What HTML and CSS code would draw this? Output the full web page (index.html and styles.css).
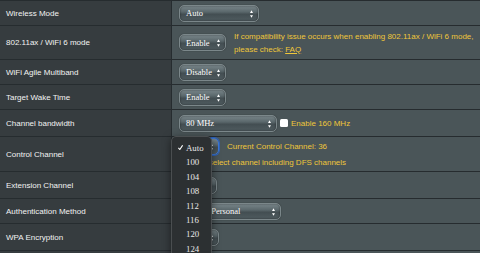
FILE: index.html
```html
<!DOCTYPE html>
<html lang="en">
<head>
    <meta charset="UTF-8">
    <meta name="viewport" content="width=device-width, initial-scale=1.0">
    <title>Wireless - Professional</title>
    <link rel="stylesheet" href="styles.css">
</head>
<body>

    <div class="form-table">
        <div class="row">
            <div class="label">Wireless Mode</div>
            <div class="value">
                <span class="select w-auto">Auto<svg class="arrows" viewBox="0 0 4 10"><path d="M2 0L4 3.5H0Z M2 10L4 6.5H0Z"/></svg></span>
            </div>
        </div>

        <div class="row row--tall">
            <div class="label">802.11ax / WiFi 6 mode</div>
            <div class="value">
                <span class="select w-enable">Enable<svg class="arrows" viewBox="0 0 4 10"><path d="M2 0L4 3.5H0Z M2 10L4 6.5H0Z"/></svg></span>
                <p class="hint">If compatibility issue occurs when enabling 802.11ax / WiFi 6 mode,<br>please check: <a href="#">FAQ</a></p>
            </div>
        </div>

        <div class="row">
            <div class="label">WiFi Agile Multiband</div>
            <div class="value">
                <span class="select w-enable">Disable<svg class="arrows" viewBox="0 0 4 10"><path d="M2 0L4 3.5H0Z M2 10L4 6.5H0Z"/></svg></span>
            </div>
        </div>

        <div class="row">
            <div class="label">Target Wake Time</div>
            <div class="value">
                <span class="select w-enable">Enable<svg class="arrows" viewBox="0 0 4 10"><path d="M2 0L4 3.5H0Z M2 10L4 6.5H0Z"/></svg></span>
            </div>
        </div>

        <div class="row row--mid">
            <div class="label">Channel bandwidth</div>
            <div class="value">
                <span class="select w-band">80 MHz<svg class="arrows" viewBox="0 0 4 10"><path d="M2 0L4 3.5H0Z M2 10L4 6.5H0Z"/></svg></span>
                <span class="checkbox"></span>
                <span class="hint">Enable 160 MHz</span>
            </div>
        </div>

        <div class="row row--taller">
            <div class="label">Control Channel</div>
            <div class="value value--stack">
                <div class="line">
                    <span class="select select--focus w-channel">Auto<svg class="arrows" viewBox="0 0 4 10"><path d="M2 0L4 3.5H0Z M2 10L4 6.5H0Z"/></svg></span>
                    <span class="hint">Current Control Channel: 36</span>
                </div>
                <div class="line line--second">
                    <span class="checkbox"></span>
                    <span class="hint">Auto select channel including DFS channels</span>
                </div>
            </div>
        </div>

        <div class="row row--mid">
            <div class="label">Extension Channel</div>
            <div class="value">
                <span class="select w-ext">Auto<svg class="arrows" viewBox="0 0 4 10"><path d="M2 0L4 3.5H0Z M2 10L4 6.5H0Z"/></svg></span>
            </div>
        </div>

        <div class="row">
            <div class="label">Authentication Method</div>
            <div class="value">
                <span class="select w-auth">WPA2-Personal<svg class="arrows" viewBox="0 0 4 10"><path d="M2 0L4 3.5H0Z M2 10L4 6.5H0Z"/></svg></span>
            </div>
        </div>

        <div class="row row--mid">
            <div class="label">WPA Encryption</div>
            <div class="value">
                <span class="select w-channel">AES<svg class="arrows" viewBox="0 0 4 10"><path d="M2 0L4 3.5H0Z M2 10L4 6.5H0Z"/></svg></span>
            </div>
        </div>

        <div class="row">
            <div class="label"></div>
            <div class="value"></div>
        </div>

        <!-- open channel list of the Control Channel select -->
        <ul class="popup">
            <li><svg class="tick" viewBox="0 0 5 5"><path d="M0.4 2.9L1.8 4.5L4.6 0.3"/></svg>Auto</li>
            <li>100</li>
            <li>104</li>
            <li>108</li>
            <li>112</li>
            <li>116</li>
            <li>120</li>
            <li>124</li>
        </ul>
    </div>

</body>
</html>
```

FILE: styles.css
```css
:root {
    --label-bg: #363c3f;
    --value-bg: #4a5558;
    --line-color: #262c2f;
    --hint-color: #efc63a;
    --text-color: #f2f2f2;
}

* {
    box-sizing: border-box;
}

body {
    margin: 0;
    background-color: var(--value-bg);
    font-family: 'Liberation Sans', Arial, sans-serif;
    font-size: 8px;
    color: var(--text-color);
    overflow: hidden;
}

.form-table {
    position: relative;
    border-top: 1px solid var(--line-color);
}

.row {
    display: grid;
    grid-template-columns: 172px 1fr;
    height: 25px;
    border-bottom: 1px solid var(--line-color);
}

.row--mid { height: 27px; }
.row--tall { height: 34px; }
.row--taller { height: 35px; }

.label {
    display: flex;
    align-items: center;
    padding-left: 6px;
    background-color: var(--label-bg);
    border-right: 1px solid var(--line-color);
}

.value {
    display: flex;
    align-items: center;
    padding-left: 7px;
    background-color: var(--value-bg);
}

.value--stack {
    flex-direction: column;
    align-items: flex-start;
    justify-content: flex-start;
}

.line {
    display: flex;
    align-items: center;
    height: 18px;
}

.line--second {
    height: 15px;
}

/* -- select boxes -- */
.select {
    position: relative;
    display: flex;
    align-items: center;
    height: 17px;
    padding-left: 6px;
    border: 1px solid #7b878a;
    border-radius: 5px;
    background: linear-gradient(to bottom, #7a878b 0%, #5a676b 40%, #434e52 55%, #4f5b5f 100%);
    box-shadow: inset 0 0 2px rgba(0, 0, 0, 0.55), 0 0 1px rgba(0, 0, 0, 0.6);
    font-family: 'Liberation Serif', 'Times New Roman', serif;
    font-size: 8.5px;
    color: #ffffff;
    white-space: nowrap;
    overflow: hidden;
    flex-shrink: 0;
}

.select--focus {
    border-color: #3c78d8;
    box-shadow: 0 0 0 1px #2f63b8;
}

.arrows {
    position: absolute;
    right: 5px;
    top: 4px;
    width: 3px;
    height: 8px;
    fill: #ffffff;
}

.w-auto { width: 80px; }
.w-enable { width: 47px; }
.w-band { width: 98px; }
.w-channel { width: 40px; }
.w-ext { width: 38px; }
.w-auth { width: 102px; }

.hint {
    margin: 0 0 0 8px;
    color: var(--hint-color);
    line-height: 13px;
    white-space: nowrap;
}

.hint a {
    color: var(--hint-color);
}

.checkbox {
    width: 8px;
    height: 8px;
    margin-left: 3px;
    background: #ffffff;
    border-radius: 1.5px;
    flex-shrink: 0;
}

.checkbox + .hint {
    margin-left: 3px;
}

.line--second .checkbox {
    margin-left: 0;
}

/* -- native-looking dropdown list -- */
.popup {
    position: absolute;
    left: 171px;
    top: 135px;
    width: 41px;
    height: 140px;
    margin: 0;
    padding: 4px 0 0 0;
    list-style: none;
    background-color: #2c3032;
    border: 1px solid #4a4e50;
    border-radius: 5px;
    box-shadow: 0 2px 8px rgba(0, 0, 0, 0.5);
    font-family: 'Liberation Serif', 'Times New Roman', serif;
    font-size: 8.8px;
    color: #e8e8e8;
}

.popup li {
    position: relative;
    height: 14.4px;
    line-height: 14.4px;
    padding-left: 14px;
}

.tick {
    position: absolute;
    left: 6px;
    top: 4px;
    width: 5px;
    height: 5px;
    fill: none;
    stroke: #ffffff;
    stroke-width: 1.1;
}
```
